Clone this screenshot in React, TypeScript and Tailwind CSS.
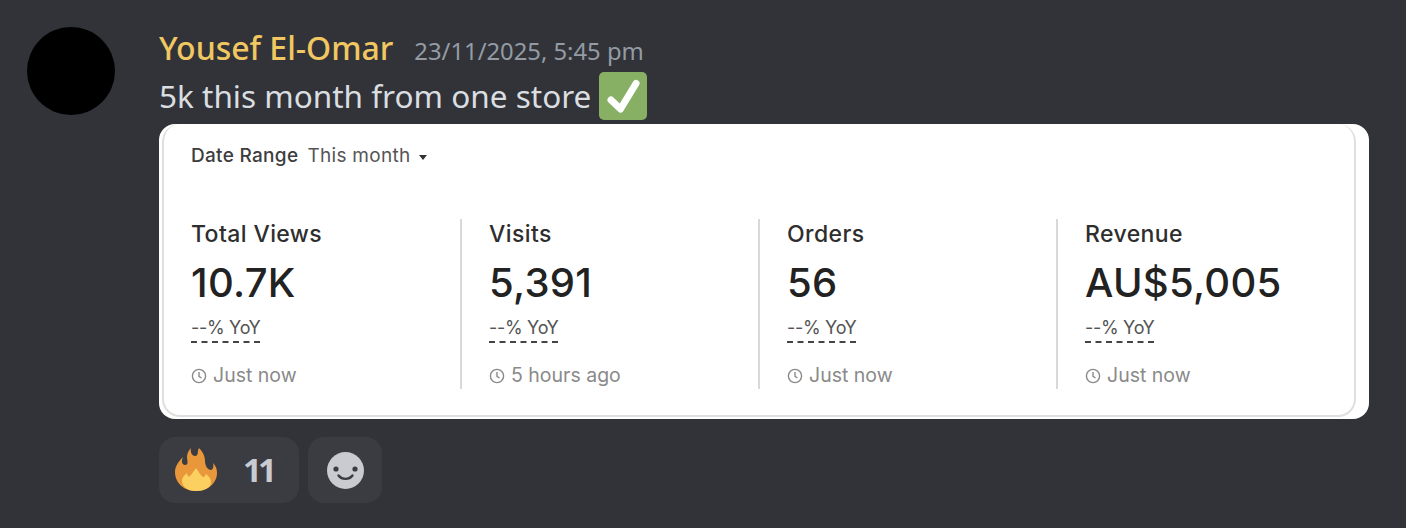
const stats = [
  { label: "Total Views", value: "10.7K", time: "Just now" },
  { label: "Visits", value: "5,391", time: "5 hours ago" },
  { label: "Orders", value: "56", time: "Just now" },
  { label: "Revenue", value: "AU$5,005", time: "Just now" },
];

const ClockIcon = () => (
  <svg width="16" height="16" viewBox="0 0 16 16" fill="none" stroke="#8a8a8a" strokeWidth="1.4" className="shrink-0">
    <circle cx="8" cy="8" r="6.6" />
    <path d="M8 4v4.300l2.500 1.700" />
  </svg>
);

const CheckEmoji = () => (
  <svg width="48" height="48" viewBox="0 0 48 48" className="shrink-0">
    <rect width="48" height="48" rx="5" fill="#88b064" />
    <path d="M12 28l9.500 9L37 11.500" fill="none" stroke="#fff" strokeWidth="7" strokeLinecap="round" strokeLinejoin="round" />
  </svg>
);

const FireEmoji = () => (
  <svg width="42" height="44" viewBox="0 0 42 44" className="shrink-0">
    <path
      d="M21 43C9 43 0 35 0 24C0 18 4 13 8 9C6 13 7 17 10 17C14 17 12 12 12 9C12 5 14 2 16 0C15 4 17 8 20 8C24 8 22 3 24 0C28 4 30 8 30 13C30 18 33 22 36 22C38 22 39 18 38 15C41 18 42 21 42 25C42 35 33 43 21 43Z"
      fill="#e8973a"
    />
    <path
      d="M21 43C13 43 7 39 7 33C7 29 10 27 12 25C12 28 14 29 15 28C17 26 18 24 21 20C24 24 25 27 28 29C30 29 30 27 31 26C34 28 36 31 36 34C36 40 29 43 21 43Z"
      fill="#fbcf60"
    />
  </svg>
);

const SmileIcon = () => (
  <svg width="37" height="37" viewBox="0 0 37 37">
    <circle cx="18.500" cy="18.500" r="18.500" fill="#c9cbd0" />
    <circle cx="9" cy="17" r="2.600" fill="#3a3c42" />
    <circle cx="28" cy="17" r="2.600" fill="#3a3c42" />
    <path d="M11.500 23.500c3.500 4.500 10.500 4.500 14 0" fill="none" stroke="#3a3c42" strokeWidth="2.400" strokeLinecap="round" />
  </svg>
);

export default function App() {
  return (
    <div className="flex h-[528px] w-[1406px] overflow-hidden bg-[#313338] pt-[27px] pl-[27px] font-['Noto_Sans',sans-serif]">
      <div className="h-[88px] w-[88px] shrink-0 rounded-full bg-black" />
      <div className="ml-[44px] w-[1210px]">
        <div className="flex h-[44px] items-baseline gap-[21px] pt-[1px]">
          <span className="text-[32px] leading-[40px] font-medium text-[#f0c761]">Yousef El-Omar</span>
          <span className="text-[23.800px] leading-[40px] text-[#949ba4]">23/11/2025, 5:45 pm</span>
        </div>
        <div className="flex h-[50px] items-center gap-[8px]">
          <span className="text-[31.500px] leading-[40px] text-[#dbdee1]">5k this month from one store</span>
          <CheckEmoji />
        </div>

        {/* embedded screenshot */}
        <div className="mt-[3px] h-[295px] rounded-[16px] bg-white pr-[13px] pb-[2px] pl-[3px] font-['Inter',sans-serif]">
          <div className="h-full rounded-[18px] border-x-2 border-b-2 border-[#dfdfdf] pt-[21px] pl-[27px]">
            <div className="flex h-[22px] items-center text-[19px] tracking-[0.3px]">
              <span className="font-medium text-[#3d3d3d]">Date Range</span>
              <span className="ml-[9px] text-[#555555]">This month</span>
              <span className="mt-[2px] ml-[8px] h-0 w-0 border-x-[4px] border-t-[5px] border-x-transparent border-t-[#333333]" />
            </div>
            <div className="mt-[52px] flex">
              {stats.map((s, i) => (
                <div
                  key={s.label}
                  className={
                    i === 3
                      ? "h-[170px] w-[258px] pt-[1px] pl-[27px]"
                      : i === 0
                        ? "h-[170px] w-[271px] border-r-2 border-[#d9d9d9] pt-[1px]"
                        : "h-[170px] w-[298px] border-r-2 border-[#d9d9d9] pt-[1px] pl-[27px]"
                  }
                >
                  <div className="h-[28px] text-[23px] leading-[28px] font-medium tracking-[0.4px] text-[#2e2e2e]">{s.label}</div>
                  <div className="mt-[12px] h-[46px] text-[40px] leading-[46px] font-medium tracking-[0.3px] text-[#222222]">{s.value}</div>
                  <div className="mt-[9px] w-[69px] border-b-2 border-dashed border-[#444444] text-[18px] leading-[26px] tracking-[-0.3px] whitespace-nowrap text-[#555555]">
                    --% YoY
                  </div>
                  <div className="mt-[20px] flex h-[26px] items-center gap-[6px] text-[19.500px] text-[#8a8a8a]">
                    <ClockIcon />
                    <span>{s.time}</span>
                  </div>
                </div>
              ))}
            </div>
          </div>
        </div>

        <div className="mt-[18px] flex gap-[9px]">
          <div className="flex h-[66px] w-[140px] items-center rounded-[16px] bg-[#3a3c42] pl-[16px]">
            <FireEmoji />
            <span className="ml-[26px] text-[33px] font-bold tracking-[-4px] text-[#c9cbd0]">11</span>
          </div>
          <div className="flex h-[66px] w-[74px] items-center justify-center rounded-[16px] bg-[#3a3c42]">
            <SmileIcon />
          </div>
        </div>
      </div>
    </div>
  );
}
